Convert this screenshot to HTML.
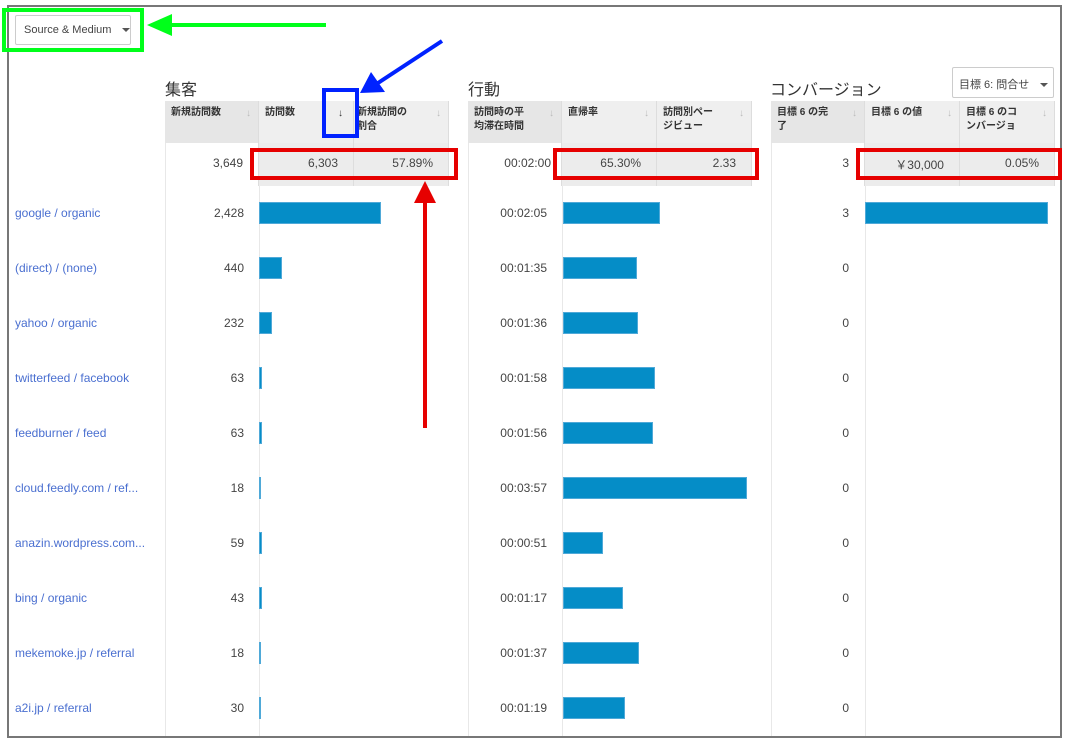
<!DOCTYPE html>
<html><head><meta charset="utf-8"><style>
*{margin:0;padding:0;box-sizing:border-box}
body{width:1068px;height:739px;background:#fff;position:relative;overflow:hidden;font-family:"Liberation Sans","Noto Sans CJK JP",sans-serif;color:#444}
.a{position:absolute}
.frame{left:7px;top:5px;width:1055px;height:733px;border:2px solid #777}
.btn{border:1px solid #ccc;border-radius:2px;background:#fff;font-size:11px;color:#444;white-space:nowrap}
.tri{display:inline-block;width:0;height:0;border-left:4px solid transparent;border-right:4px solid transparent;border-top:4px solid #555;vertical-align:middle}
.gt{font-size:16px;color:#333}
.hd{background:#efefef;border-right:1px solid #ddd;font-size:10px;font-weight:bold;color:#333;padding:5px 6px;line-height:14px;height:42px}
.hd.f{background:#e6e6e6}
.ar{position:absolute;right:7px;top:6px;color:#bbb;font-size:10px;font-weight:normal}
.tot{height:43px;font-size:12px;text-align:right;padding:13px 15px 0 0;color:#444;border-right:1px solid #ddd}
.tot.g{background:#ececec}
.vl{width:1px;background:#e8e8e8}
.lab{left:15px;font-size:12px;color:#4a6fd0}
.num{font-size:12px;text-align:right;color:#444}
.bar{height:22px;background:#058dc7;border:1px solid #4fa9d8}
</style></head><body>
<div class="a frame"></div>
<div class="a btn" style="left:15px;top:15px;width:116px;height:30px;padding:8px 8px">Source &amp; Medium <span class="tri" style="margin-left:8px"></span></div>
<div class="a btn" style="left:952px;top:67px;width:102px;height:31px;padding:8px 6px;font-size:11px">目標 6: 問合せ <span class="tri" style="margin-left:8px"></span></div>
<div class="a gt" style="left:165px;top:76px">集客</div>
<div class="a gt" style="left:468px;top:76px">行動</div>
<div class="a gt" style="left:770px;top:76px">コンバージョン</div>

<div class="a" style="left:165px;top:101px;width:284px;display:flex">
<div class="hd f" style="width:94px;position:relative">新規訪問数<span class="ar">↓</span></div>
<div class="hd" style="width:95px;position:relative">訪問数<span class="ar" style="color:#333;right:10px">↓</span></div>
<div class="hd" style="width:95px;position:relative;padding-left:3px">新規訪問の<br>割合<span class="ar">↓</span></div></div>
<div class="a" style="left:165px;top:143px;width:284px;display:flex">
<div class="tot" style="width:94px;border-left:1px solid #e8e8e8">3,649</div>
<div class="tot g" style="width:95px">6,303</div>
<div class="tot g" style="width:95px">57.89%</div></div>

<div class="a" style="left:468px;top:101px;width:284px;display:flex">
<div class="hd f" style="width:94px;position:relative">訪問時の平<br>均滞在時間<span class="ar">↓</span></div>
<div class="hd" style="width:95px;position:relative">直帰率<span class="ar">↓</span></div>
<div class="hd" style="width:95px;position:relative">訪問別ペー<br>ジビュー<span class="ar">↓</span></div></div>
<div class="a" style="left:468px;top:143px;width:284px;display:flex">
<div class="tot" style="width:94px;border-left:1px solid #e8e8e8;padding-right:10px">00:02:00</div>
<div class="tot g" style="width:95px">65.30%</div>
<div class="tot g" style="width:95px">2.33</div></div>

<div class="a" style="left:771px;top:101px;width:284px;display:flex">
<div class="hd f" style="width:94px;position:relative">目標 6 の完<br>了<span class="ar">↓</span></div>
<div class="hd" style="width:95px;position:relative">目標 6 の値<span class="ar">↓</span></div>
<div class="hd" style="width:95px;position:relative">目標 6 のコ<br>ンバージョ<span class="ar">↓</span></div></div>
<div class="a" style="left:771px;top:143px;width:284px;display:flex">
<div class="tot" style="width:94px;border-left:1px solid #e8e8e8">3</div>
<div class="tot g" style="width:95px">￥30,000</div>
<div class="tot g" style="width:95px">0.05%</div></div>

<div class="a vl" style="left:165px;top:186px;height:550px"></div>
<div class="a vl" style="left:259px;top:186px;height:550px"></div>
<div class="a vl" style="left:468px;top:186px;height:550px"></div>
<div class="a vl" style="left:562px;top:186px;height:550px"></div>
<div class="a vl" style="left:771px;top:186px;height:550px"></div>
<div class="a vl" style="left:865px;top:186px;height:550px"></div>

<div class="a lab" style="top:206px">google / organic</div>
<div class="a lab" style="top:261px">(direct) / (none)</div>
<div class="a lab" style="top:316px">yahoo / organic</div>
<div class="a lab" style="top:371px">twitterfeed / facebook</div>
<div class="a lab" style="top:426px">feedburner / feed</div>
<div class="a lab" style="top:481px">cloud.feedly.com / ref...</div>
<div class="a lab" style="top:536px">anazin.wordpress.com...</div>
<div class="a lab" style="top:591px">bing / organic</div>
<div class="a lab" style="top:646px">mekemoke.jp / referral</div>
<div class="a lab" style="top:701px">a2i.jp / referral</div>

<div class="a num" style="left:165px;width:79px;top:206px">2,428</div>
<div class="a num" style="left:165px;width:79px;top:261px">440</div>
<div class="a num" style="left:165px;width:79px;top:316px">232</div>
<div class="a num" style="left:165px;width:79px;top:371px">63</div>
<div class="a num" style="left:165px;width:79px;top:426px">63</div>
<div class="a num" style="left:165px;width:79px;top:481px">18</div>
<div class="a num" style="left:165px;width:79px;top:536px">59</div>
<div class="a num" style="left:165px;width:79px;top:591px">43</div>
<div class="a num" style="left:165px;width:79px;top:646px">18</div>
<div class="a num" style="left:165px;width:79px;top:701px">30</div>

<div class="a bar" style="left:259px;top:202px;width:122px"></div>
<div class="a bar" style="left:259px;top:257px;width:23px"></div>
<div class="a bar" style="left:259px;top:312px;width:13px"></div>
<div class="a bar" style="left:259px;top:367px;width:3px"></div>
<div class="a bar" style="left:259px;top:422px;width:3px"></div>
<div class="a bar" style="left:259px;top:477px;width:2px"></div>
<div class="a bar" style="left:259px;top:532px;width:3px"></div>
<div class="a bar" style="left:259px;top:587px;width:3px"></div>
<div class="a bar" style="left:259px;top:642px;width:2px"></div>
<div class="a bar" style="left:259px;top:697px;width:2px"></div>

<div class="a num" style="left:468px;width:79px;top:206px">00:02:05</div>
<div class="a num" style="left:468px;width:79px;top:261px">00:01:35</div>
<div class="a num" style="left:468px;width:79px;top:316px">00:01:36</div>
<div class="a num" style="left:468px;width:79px;top:371px">00:01:58</div>
<div class="a num" style="left:468px;width:79px;top:426px">00:01:56</div>
<div class="a num" style="left:468px;width:79px;top:481px">00:03:57</div>
<div class="a num" style="left:468px;width:79px;top:536px">00:00:51</div>
<div class="a num" style="left:468px;width:79px;top:591px">00:01:17</div>
<div class="a num" style="left:468px;width:79px;top:646px">00:01:37</div>
<div class="a num" style="left:468px;width:79px;top:701px">00:01:19</div>

<div class="a bar" style="left:563px;top:202px;width:97px"></div>
<div class="a bar" style="left:563px;top:257px;width:74px"></div>
<div class="a bar" style="left:563px;top:312px;width:75px"></div>
<div class="a bar" style="left:563px;top:367px;width:92px"></div>
<div class="a bar" style="left:563px;top:422px;width:90px"></div>
<div class="a bar" style="left:563px;top:477px;width:184px"></div>
<div class="a bar" style="left:563px;top:532px;width:40px"></div>
<div class="a bar" style="left:563px;top:587px;width:60px"></div>
<div class="a bar" style="left:563px;top:642px;width:76px"></div>
<div class="a bar" style="left:563px;top:697px;width:62px"></div>

<div class="a num" style="left:771px;width:78px;top:206px">3</div>
<div class="a num" style="left:771px;width:78px;top:261px">0</div>
<div class="a num" style="left:771px;width:78px;top:316px">0</div>
<div class="a num" style="left:771px;width:78px;top:371px">0</div>
<div class="a num" style="left:771px;width:78px;top:426px">0</div>
<div class="a num" style="left:771px;width:78px;top:481px">0</div>
<div class="a num" style="left:771px;width:78px;top:536px">0</div>
<div class="a num" style="left:771px;width:78px;top:591px">0</div>
<div class="a num" style="left:771px;width:78px;top:646px">0</div>
<div class="a num" style="left:771px;width:78px;top:701px">0</div>
<div class="a bar" style="left:865px;top:202px;width:183px"></div>

<svg class="a" style="left:0;top:0" width="1068" height="739">
<rect x="4" y="10" width="138" height="40" fill="none" stroke="#00ff1a" stroke-width="4"/>
<line x1="170" y1="25" x2="326" y2="25" stroke="#00ff1a" stroke-width="4"/>
<polygon points="147,25 172,14 172,36" fill="#00ff1a"/>
<rect x="324" y="90" width="33" height="46" fill="none" stroke="#0022ff" stroke-width="4"/>
<line x1="442" y1="41" x2="378" y2="83" stroke="#0022ff" stroke-width="4"/>
<polygon points="360,93 371,72 385,92" fill="#0022ff"/>
<rect x="252" y="150" width="204" height="28" fill="none" stroke="#e60000" stroke-width="4"/>
<rect x="555" y="150" width="202" height="28" fill="none" stroke="#e60000" stroke-width="4"/>
<rect x="858" y="150" width="202" height="28" fill="none" stroke="#e60000" stroke-width="4"/>
<line x1="425" y1="200" x2="425" y2="428" stroke="#e60000" stroke-width="4"/>
<polygon points="425,181 414,203 436,203" fill="#e60000"/>
</svg>
</body></html>
